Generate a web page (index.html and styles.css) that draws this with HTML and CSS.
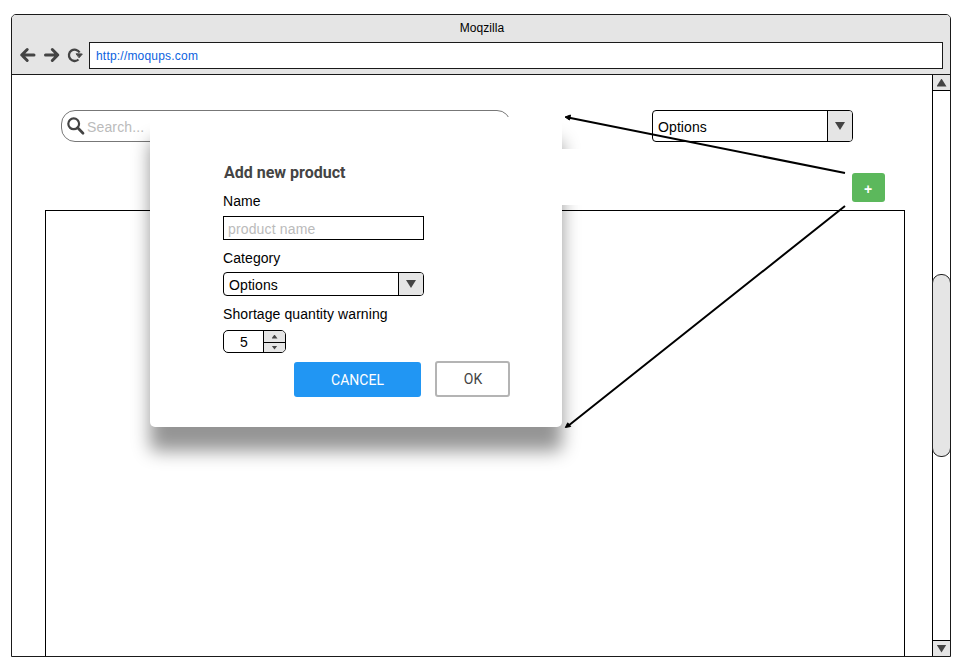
FILE: index.html
```html
<!DOCTYPE html>
<html lang="en">
<head>
<meta charset="utf-8">
<title>Moqzilla</title>
<link rel="stylesheet" href="styles.css">
</head>
<body>
<div class="browser">
  <header class="chrome">
    <div class="title">Moqzilla</div>
    <div class="nav">
      <svg class="nav-icons" width="77" height="28" viewBox="0 0 77 28" fill="none" stroke="#444" stroke-linecap="round" stroke-linejoin="round">
        <path d="M10 13H22M15.200 7.500L9.700 13L15.200 18.500" stroke-width="3"/>
        <path d="M33.500 13H45.500M40.300 7.500L45.800 13L40.300 18.500" stroke-width="3"/>
        <path d="M66.500 17.500A5.700 5.700 0 1 1 67.600 10.500" stroke-width="2.300" stroke-linecap="butt"/>
        <path d="M64.500 11.800L70.300 12L67.300 15.500Z" fill="#444" stroke-width="1"/>
      </svg>
      <div class="url">http://moqups.com</div>
    </div>
  </header>
  <div class="viewport">
    <main class="page">
      <div class="toolbar">
        <div class="search">
          <svg width="20" height="20" viewBox="0 0 20 20" fill="none" stroke="#444"><circle cx="7.700" cy="7.800" r="5.400" stroke-width="2.200"/><path d="M11.700 11.800L17 17.200" stroke-width="2.700" stroke-linecap="round"/></svg>
          <span>Search...</span>
        </div>
        <div class="select tall"><span>Options</span><i><b class="down"></b></i></div>
      </div>
      <button class="add">+</button>
      <div class="panel"></div>
    </main>
    <aside class="scrollbar">
      <div class="scroll-btn top"><b class="up"></b></div>
      <div class="thumb"></div>
      <div class="scroll-btn bottom"><b class="down"></b></div>
    </aside>
  </div>
</div>
<section class="dialog">
  <h1>Add new product</h1>
  <label>Name</label>
  <div class="input">product name</div>
  <label class="category">Category</label>
  <div class="select"><span>Options</span><i><b class="down"></b></i></div>
  <label class="shortage">Shortage quantity warning</label>
  <div class="spinner"><span>5</span><div class="steps"><i><b class="up"></b></i><i><b class="down"></b></i></div></div>
  <div class="actions"><button class="cancel">CANCEL</button><button class="ok">OK</button></div>
</section>
<div class="cover"></div>
<svg class="arrows" width="963" height="670" viewBox="0 0 963 670" stroke="#000" stroke-width="2">
  <path d="M845 173L568 117.500M845 206L568 426"/>
  <path d="M565 117L570.500 115L569.500 120ZM565.300 427.500L567.700 422.800L570.700 426.500Z" stroke-width="1"/>
</svg>
</body>
</html>
```
FILE: styles.css
```css
* { box-sizing: border-box; }
body {
  margin: 0;
  width: 963px;
  height: 670px;
  padding: 14px 12px 13px 11px;
  overflow: hidden;
  position: relative;
  background: #fff;
  color: #000;
  font: 14px "Liberation Sans", Arial, sans-serif;
}
button { font: inherit; margin: 0; padding: 0; }

.browser {
  height: 643px;
  display: flex;
  flex-direction: column;
  border: 1px solid #1a1a1a;
  border-radius: 5px 5px 0 0;
  overflow: hidden;
}
.chrome {
  height: 60px;
  background: #e5e5e5;
  border-bottom: 1px solid #1a1a1a;
}
.title {
  height: 27px;
  line-height: 27px;
  text-align: center;
  font-size: 12px;
  padding-left: 2px;
  letter-spacing: .05px;
}
.nav { display: flex; }
.nav-icons { flex: none; }
.url {
  width: 854px;
  height: 27px;
  border: 1px solid #1a1a1a;
  background: #fff;
  padding-left: 6px;
  line-height: 26px;
  font-size: 12px;
  letter-spacing: .2px;
  color: #0b62e0;
}

.viewport { flex: 1; display: flex; }
.page {
  width: 920px;
  display: flex;
  flex-direction: column;
  padding: 35px 27px 0 33px;
}
.toolbar { display: flex; padding-left: 16px; }
.search {
  width: 450px;
  height: 32px;
  margin-right: 141px;
  display: flex;
  align-items: center;
  gap: 1px;
  padding-left: 4px;
  border: 1px solid #777;
  border-radius: 14px;
  color: #bbb;
}
.search span { padding-top: 2px; letter-spacing: .15px; }
.add {
  align-self: flex-end;
  width: 33px;
  height: 29px;
  margin: 31px 20px 8px 0;
  padding: 2px 1px 0 0;
  border: 0;
  border-radius: 3px;
  background: #5cb85c;
  color: #fff;
  font-size: 14px;
  font-weight: bold;
}
.panel { flex: 1; border: 1px solid #000; border-bottom: 0; }

.select {
  display: flex;
  width: 201px;
  height: 24px;
  border: 1px solid #000;
  border-radius: 4px;
  background: #fff;
  overflow: hidden;
}
.select.tall { height: 32px; }
.select span { flex: 1; padding: 1px 0 0 5px; line-height: 23px; letter-spacing: .1px; }
.select.tall span { line-height: 31px; }
.select i {
  width: 25px;
  display: flex;
  align-items: center;
  justify-content: center;
  border-left: 1px solid #000;
  background: #e5e5e5;
}
.up, .down {
  width: 10px;
  height: 8px;
  background: #444;
}
.up { clip-path: polygon(50% 0, 100% 100%, 0 100%); }
.down { clip-path: polygon(0 0, 100% 0, 50% 100%); }

.scrollbar {
  width: 18px;
  display: flex;
  flex-direction: column;
  border-left: 1px solid #000;
}
.scroll-btn {
  height: 16px;
  display: flex;
  align-items: center;
  justify-content: center;
  background: #e5e5e5;
}
.scroll-btn.top { border-bottom: 1px solid #000; }
.scroll-btn.bottom { margin-top: auto; border-top: 1px solid #000; }
.thumb {
  height: 183px;
  margin: 183px -1px 0;
  border: 1px solid #222;
  border-radius: 9px;
  background: #e5e5e5;
}

.dialog {
  position: absolute;
  left: 150px;
  top: 117px;
  width: 412px;
  height: 310px;
  padding: 46px 52px 0 73px;
  border-radius: 5px;
  background: #fff;
  box-shadow: 0 24px 18px rgba(0, 0, 0, .42);
}
.dialog h1 {
  margin: 0 0 11px 1px;
  font: bold 16px/19px Roboto, sans-serif;
  color: #444;
}
.dialog label { display: block; height: 16px; line-height: 16px; letter-spacing: .08px; margin-bottom: 8px; }
.dialog label + .input { margin-top: -1px; }
.dialog .category { margin: 10px 0 6px; }
.dialog .shortage { margin: 10px 0 8px; }
.input {
  width: 201px;
  height: 24px;
  border: 1px solid #000;
  padding: 1px 0 0 4px;
  line-height: 23px;
  letter-spacing: .15px;
  color: #bbb;
}
.spinner {
  display: flex;
  width: 63px;
  height: 23px;
  border: 1px solid #000;
  border-radius: 5px;
  overflow: hidden;
}
.spinner span { width: 39px; text-align: center; line-height: 22px; padding-left: 1px; }
.steps { flex: 1; border-left: 1px solid #000; background: #e5e5e5; }
.steps i { height: 11px; display: flex; align-items: center; justify-content: center; }
.steps i + i { height: 10px; border-top: 1px solid #000; }
.steps b { width: 6px; height: 4px; }
.actions { display: flex; gap: 14px; margin: 8px 0 0 71px; }
.actions button {
  font: 14px Roboto, sans-serif;
  border-radius: 3px;
}
.actions .cancel {
  width: 127px;
  height: 35px;
  margin-top: 1px;
  padding-top: 1px;
  border: 0;
  background: #2196f3;
  color: #fff;
}
.actions .ok {
  width: 75px;
  height: 36px;
  padding-left: 1px;
  border: 2px solid #b4b4b4;
  background: #fff;
  color: #444;
}
.cover {
  position: absolute;
  left: 562px;
  top: 149px;
  width: 70px;
  height: 56px;
  background: #fff;
}
.arrows { position: absolute; left: 0; top: 0; pointer-events: none; }
```
